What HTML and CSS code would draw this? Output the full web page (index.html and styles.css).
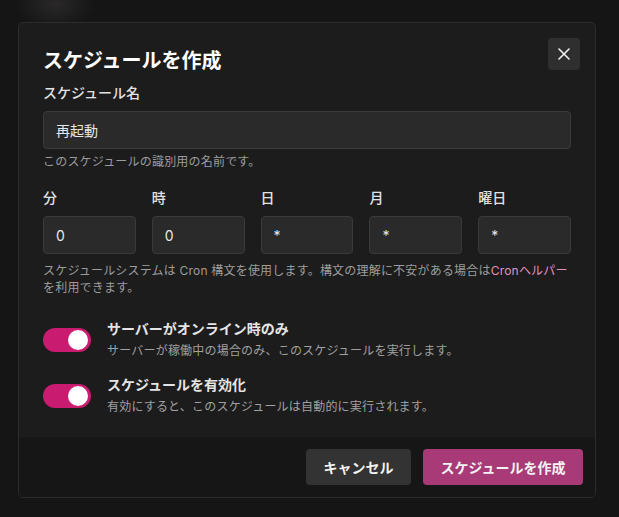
FILE: index.html
```html
<!DOCTYPE html>
<html lang="ja">
<head>
<meta charset="utf-8">
<title>スケジュールを作成</title>
<link rel="stylesheet" href="styles.css">
</head>
<body>
<div class="modal">
  <div class="modal-body">
    <button class="close" aria-label="閉じる">
      <svg width="12" height="12" viewBox="0 0 12 12"><path d="M1 1L11 11M11 1L1 11" stroke="#f0f0f0" stroke-width="1.6" stroke-linecap="round"/></svg>
    </button>
    <h1 class="title">スケジュールを作成</h1>
    <label class="label">スケジュール名</label>
    <div class="input">再起動</div>
    <p class="help">このスケジュールの識別用の名前です。</p>

    <div class="cron">
      <div class="field"><label class="label">分</label><div class="input">0</div></div>
      <div class="field"><label class="label">時</label><div class="input">0</div></div>
      <div class="field"><label class="label">日</label><div class="input">*</div></div>
      <div class="field"><label class="label">月</label><div class="input">*</div></div>
      <div class="field"><label class="label">曜日</label><div class="input">*</div></div>
    </div>
    <p class="help cron-help">スケジュールシステムは Cron 構文を使用します。構文の理解に不安がある場合は<a class="link" href="#">Cronヘルパー</a>を利用できます。</p>

    <div class="toggles">
      <div class="toggle-row">
        <span class="toggle"><span class="knob"></span></span>
        <div class="toggle-text">
          <div class="toggle-title">サーバーがオンライン時のみ</div>
          <div class="toggle-desc">サーバーが稼働中の場合のみ、このスケジュールを実行します。</div>
        </div>
      </div>
      <div class="toggle-row">
        <span class="toggle"><span class="knob"></span></span>
        <div class="toggle-text">
          <div class="toggle-title">スケジュールを有効化</div>
          <div class="toggle-desc">有効にすると、このスケジュールは自動的に実行されます。</div>
        </div>
      </div>
    </div>
  </div>
  <div class="modal-footer">
    <button class="btn btn-secondary">キャンセル</button>
    <button class="btn btn-primary">スケジュールを作成</button>
  </div>
</div>
</body>
</html>
```

FILE: styles.css
```css
* { box-sizing: border-box; }
html, body { margin: 0; padding: 0; }
body {
  width: 619px;
  height: 517px;
  overflow: hidden;
  background: radial-gradient(ellipse 40px 26px at 55px 4px, #2a2828 0%, rgba(30,30,30,0) 100%), #151515;
  font-family: "Inter", "Noto Sans CJK JP", sans-serif;
  color: #e6e6e6;
  padding-top: 22px;
  padding-left: 18px;
}
.modal {
  width: 578px;
  height: 476px;
  background: #1c1c1c;
  border: 1px solid #2c2c2c;
  border-radius: 5px;
  display: flex;
  flex-direction: column;
  position: relative;
  overflow: hidden;
}
.modal-body {
  flex: 1;
  padding: 24px 24px 0 24px;
}
.close {
  position: absolute;
  top: 15px;
  right: 15px;
  width: 32px;
  height: 32px;
  border: none;
  border-radius: 4px;
  background: #2f2f2f;
  display: flex;
  align-items: center;
  justify-content: center;
  padding: 0;
}
.title {
  margin: 0 0 8px 0;
  font-size: 20px;
  line-height: 28px;
  font-weight: 700;
  color: #ffffff;
}
.label {
  display: block;
  font-size: 14px;
  line-height: 20px;
  font-weight: 500;
  color: #e2e2e2;
  margin-bottom: 8px;
}
.input {
  height: 38px;
  background: #2a2a2a;
  border: 1px solid #3a3a3a;
  border-radius: 4px;
  padding: 0 12px;
  display: flex;
  align-items: center;
  font-size: 14px;
  color: #e8e8e8;
}
.help {
  margin: 5px 0 0 0;
  font-size: 12px;
  line-height: 16px;
  letter-spacing: 0.2px;
  color: #9c9c9c;
}
.cron {
  display: grid;
  grid-template-columns: repeat(5, 1fr);
  gap: 16px;
  margin-top: 18px;
}
.field .label { margin-bottom: 8px; }
.cron-help {
  margin-top: 8px;
  line-height: 17px;
}
.link {
  color: #e58fbd;
  text-decoration: none;
}
.toggles {
  display: flex;
  flex-direction: column;
  gap: 14px;
  margin-top: 23px;
}
.toggle-row {
  display: flex;
  align-items: center;
  gap: 16px;
}
.toggle {
  width: 48px;
  height: 24px;
  border-radius: 12px;
  background: #c91b6f;
  position: relative;
  flex-shrink: 0;
}
.knob {
  position: absolute;
  top: 2px;
  right: 3px;
  width: 20px;
  height: 20px;
  border-radius: 50%;
  background: #ffffff;
}
.toggle-title {
  font-size: 14px;
  line-height: 20px;
  font-weight: 700;
  color: #e4e4e4;
}
.toggle-desc {
  margin-top: 2px;
  font-size: 12px;
  line-height: 20px;
  letter-spacing: 0.2px;
  color: #a0a0a0;
}
.modal-footer {
  height: 60px;
  background: #161616;
  display: flex;
  justify-content: flex-end;
  align-items: center;
  gap: 12px;
  padding: 0 12px;
}
.btn {
  height: 36px;
  border: none;
  border-radius: 4px;
  padding: 0 17.5px;
  font-family: "Inter", "Noto Sans CJK JP", sans-serif;
  font-size: 14px;
  font-weight: 700;
  color: #f2f2f2;
}
.btn-secondary { background: #333333; }
.btn-primary { background: #a93a78; }
```
